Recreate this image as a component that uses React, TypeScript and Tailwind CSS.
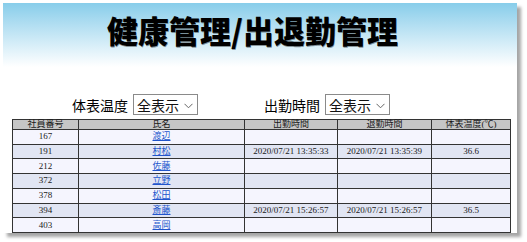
import React from "react";

interface Row {
  id: string;
  name: string;
  inTime: string;
  outTime: string;
  temp: string;
}

const rows: Row[] = [
  { id: "167", name: "渡辺", inTime: "", outTime: "", temp: "" },
  { id: "191", name: "村松", inTime: "2020/07/21 13:35:33", outTime: "2020/07/21 13:35:39", temp: "36.6" },
  { id: "212", name: "佐藤", inTime: "", outTime: "", temp: "" },
  { id: "372", name: "立野", inTime: "", outTime: "", temp: "" },
  { id: "378", name: "松田", inTime: "", outTime: "", temp: "" },
  { id: "394", name: "斎藤", inTime: "2020/07/21 15:26:57", outTime: "2020/07/21 15:26:57", temp: "36.5" },
  { id: "403", name: "高岡", inTime: "", outTime: "", temp: "" },
];

const jp = "font-['Noto_Sans_CJK_JP','Noto_Sans',sans-serif]";
const serif = "font-['Liberation_Serif','Noto_Sans_CJK_JP',serif]";

function FilterSelect() {
  return (
    <div className="flex h-[21px] w-[65px] items-center justify-between border border-[#8a8a8a] bg-white pl-[3px] pr-[4px]">
      <span className="text-[14px] leading-none text-[#111]">全表示</span>
      <svg width="9" height="6" viewBox="0 0 9 6" className="mt-[2px]">
        <path d="M0.5 0.8 L4.5 4.8 L8.5 0.8" fill="none" stroke="#666" strokeWidth="1" />
      </svg>
    </div>
  );
}

export default function App() {
  return (
    <div className="h-[242px] w-[527px] bg-white pl-[3px] pt-[3px]">
      <div className={`h-[230px] w-[514px] bg-white shadow-[4px_4px_3px_rgba(0,0,0,0.35)] ${jp}`}>
        <div className="h-[64px] bg-gradient-to-b from-[#87cdea] to-white pl-[104px] pt-[10px]">
          <h1 className="text-[31px] font-black leading-[34px] text-black [text-shadow:0.5px_0.5px_0.5px_rgba(0,0,0,0.4)]">
            健康管理/出退勤管理
          </h1>
        </div>

        <div className="flex items-center pl-[69px] pt-[27px]">
          <div className="flex items-center gap-[5px]">
            <span className="text-[14px] leading-none text-black">体表温度</span>
            <FilterSelect />
          </div>
          <div className="ml-[66px] flex items-center gap-[5px]">
            <span className="text-[14px] leading-none text-black">出勤時間</span>
            <FilterSelect />
          </div>
        </div>

        <table className={`ml-[9px] mt-[4px] h-[114px] w-[498px] table-fixed border-collapse text-[9px] text-[#1a1a1a] ${serif}`}>
          <colgroup>
            <col className="w-[66px]" />
            <col className="w-[166px]" />
            <col className="w-[93px]" />
            <col className="w-[94px]" />
            <col className="w-[79px]" />
          </colgroup>
          <thead>
            <tr className="bg-[#c6c6c6]">
              <th className="border border-[#333] p-0 text-center font-normal leading-none">社員番号</th>
              <th className="border border-[#333] p-0 text-center font-normal leading-none">氏名</th>
              <th className="border border-[#333] p-0 text-center font-normal leading-none">出勤時間</th>
              <th className="border border-[#333] p-0 text-center font-normal leading-none">退勤時間</th>
              <th className="border border-[#333] p-0 text-center font-normal leading-none">体表温度(℃)</th>
            </tr>
          </thead>
          <tbody>
            {rows.map((r, i) => (
              <tr key={r.id} className={i % 2 === 0 ? "bg-[#f5f5fe]" : "bg-[#e1e5f3]"}>
                <td className="border border-[#333] p-0 text-center leading-none">{r.id}</td>
                <td className="border border-[#333] p-0 text-center leading-none">
                  <a href="#" className="text-[#2255cc] underline">{r.name}</a>
                </td>
                <td className="border border-[#333] p-0 text-center leading-none">{r.inTime}</td>
                <td className="border border-[#333] p-0 text-center leading-none">{r.outTime}</td>
                <td className="border border-[#333] p-0 text-center leading-none">{r.temp}</td>
              </tr>
            ))}
          </tbody>
        </table>
      </div>
    </div>
  );
}
